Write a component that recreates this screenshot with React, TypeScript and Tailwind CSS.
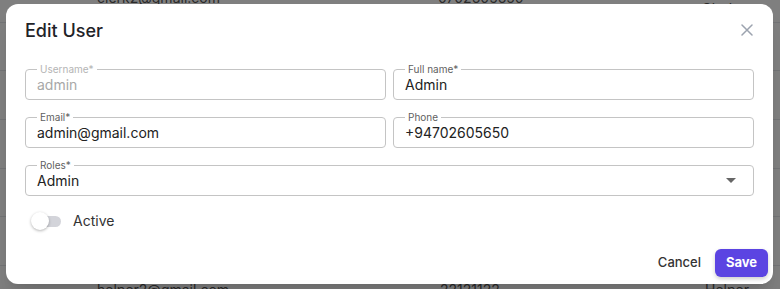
import React from 'react';

type Row = { email: string; phone: string; role: string };

// only the first and last rows peek out from behind the dialog
const rows: Row[] = [
  { email: 'clerk2@gmail.com', phone: '0702605650', role: 'Office Clerk' },
  { email: '', phone: '', role: '' },
  { email: '', phone: '', role: '' },
  { email: '', phone: '', role: '' },
  { email: '', phone: '', role: '' },
  { email: '', phone: '', role: '' },
  { email: 'helper2@gmail.com', phone: '22121122', role: 'Helper' },
];

const Field: React.FC<{ label: string; value: string; disabled?: boolean; select?: boolean }> = ({
  label,
  value,
  disabled,
  select,
}) => (
  <div className="relative flex h-[31px] items-center rounded-[4px] border border-[#c4c4c4] pl-[11px] pr-[16px]">
    <span
      className={`absolute -top-[6px] left-[11px] bg-white px-[3px] text-[10px] leading-[11px] ${
        disabled ? 'text-[#b4b4b4]' : 'text-[#5f5f5f]'
      }`}
    >
      {label}
    </span>
    <span className={`flex-1 text-[14px] ${disabled ? 'text-[#a8a8a8]' : 'text-[#222]'}`}>{value}</span>
    {select && (
      <svg width="10" height="5" viewBox="0 0 10 5" className="mr-[1px]">
        <path d="M0 0 L10 0 L5 5 Z" fill="#666" />
      </svg>
    )}
  </div>
);

const App: React.FC = () => {
  return (
    <div className="relative h-[289px] w-full overflow-hidden bg-white font-['Inter','Liberation_Sans',sans-serif]">
      {/* Table behind the modal */}
      <div className="-mt-[26px] flex flex-col">
        {rows.map((r, i) => (
          <div key={i} className="flex h-[48.67px] items-center border-b border-[#e5e7eb] text-[14px] text-[#555]">
            <span className="w-[440px] pl-[97px]">{r.email}</span>
            <span className="w-[265px]">{r.phone}</span>
            <span>{r.role}</span>
          </div>
        ))}
      </div>

      {/* Backdrop */}
      <div className="absolute inset-0 bg-black/50" />

      {/* Dialog */}
      <div className="absolute left-[6px] top-[4px] flex h-[280px] w-[767px] flex-col rounded-xl bg-white px-[19px] pt-[12px] pb-[7px] shadow-xl">
        <div className="flex h-[28px] items-center justify-between">
          <h2 className="text-[18px] font-medium text-[#1f2328]">Edit User</h2>
          <svg width="12" height="12" viewBox="0 0 12 12" className="mr-[1px]">
            <path d="M1 1 L11 11 M11 1 L1 11" stroke="#9ca3af" strokeWidth="1.5" strokeLinecap="round" />
          </svg>
        </div>

        <div className="mt-[25px] grid grid-cols-2 gap-x-[7px] gap-y-[17px]">
          <Field label="Username*" value="admin" disabled />
          <Field label="Full name*" value="Admin" />
          <Field label="Email*" value="admin@gmail.com" />
          <Field label="Phone" value="+94702605650" />
          <div className="col-span-2">
            <Field label="Roles*" value="Admin" select />
          </div>
        </div>

        <div className="mt-[14px] flex items-center gap-[10px] pl-[6px]">
          <div className="relative h-[18px] w-[32px]">
            <div className="absolute left-[3px] top-[4px] h-[11px] w-[27px] rounded-full bg-[#d3d4da]" />
            <div className="absolute left-0 top-0 h-[18px] w-[18px] rounded-full bg-white shadow-[0_1px_3px_rgba(0,0,0,0.3)]" />
          </div>
          <span className="text-[14px] text-[#333]">Active</span>
        </div>

        <div className="-mr-[14px] mt-auto flex items-center justify-end gap-[14px]">
          <button className="text-[13px] font-medium text-[#333]">Cancel</button>
          <button className="h-[28px] w-[53px] rounded-[6px] bg-[#5b44e2] text-[13px] font-bold text-white shadow-[0_2px_4px_rgba(0,0,0,0.2)]">
            Save
          </button>
        </div>
      </div>
    </div>
  );
};

export default App;
